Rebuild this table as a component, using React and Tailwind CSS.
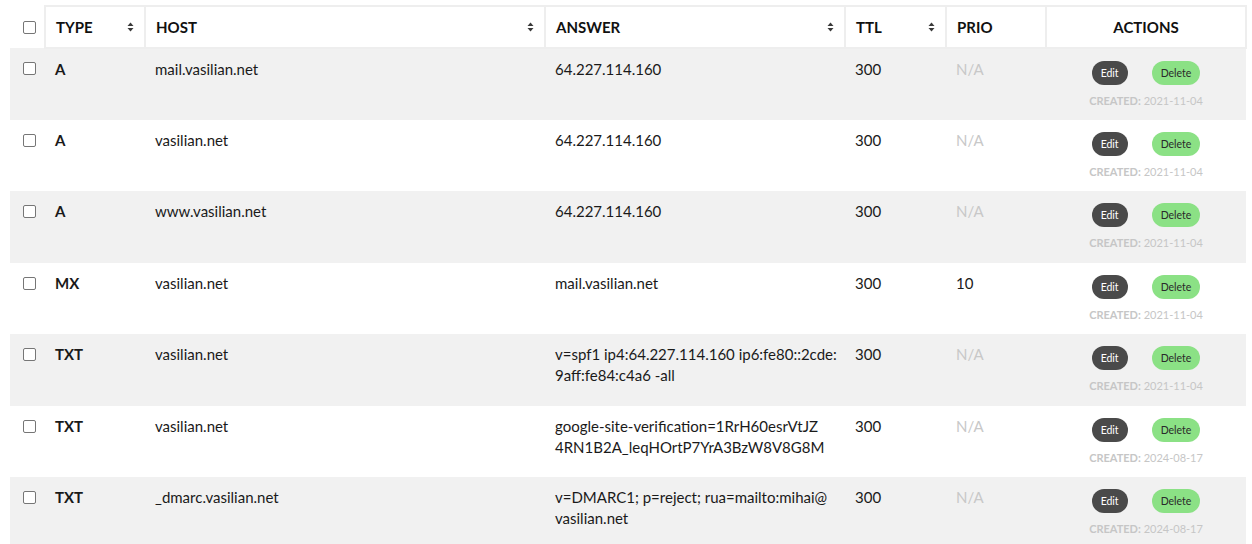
import React from "react";

const rows = [
  { type: "A", host: "mail.vasilian.net", answer: ["64.227.114.160"], ttl: "300", prio: null, created: "2021-11-04" },
  { type: "A", host: "vasilian.net", answer: ["64.227.114.160"], ttl: "300", prio: null, created: "2021-11-04" },
  { type: "A", host: "www.vasilian.net", answer: ["64.227.114.160"], ttl: "300", prio: null, created: "2021-11-04" },
  { type: "MX", host: "vasilian.net", answer: ["mail.vasilian.net"], ttl: "300", prio: "10", created: "2021-11-04" },
  { type: "TXT", host: "vasilian.net", answer: ["v=spf1 ip4:64.227.114.160 ip6:fe80::2cde:", "9aff:fe84:c4a6 -all"], ttl: "300", prio: null, created: "2021-11-04" },
  { type: "TXT", host: "vasilian.net", answer: ["google-site-verification=1RrH60esrVtJZ", "4RN1B2A_leqHOrtP7YrA3BzW8V8G8M"], ttl: "300", prio: null, created: "2024-08-17" },
  { type: "TXT", host: "_dmarc.vasilian.net", answer: ["v=DMARC1; p=reject; rua=mailto:mihai@", "vasilian.net"], ttl: "300", prio: null, created: "2024-08-17" },
];

function SortIcon() {
  return (
    <svg width="7" height="10" viewBox="0 0 7 10" className="shrink-0">
      <path d="M3.5 0.5 L6.5 4 L0.5 4 Z" fill="#3a3a3a" />
      <path d="M3.5 9.5 L6.5 6 L0.5 6 Z" fill="#3a3a3a" />
    </svg>
  );
}

function Box() {
  return <span className="block w-[13px] h-[13px] border border-[#767676] rounded-[2px] bg-white" />;
}

function Th({ label, sort = true }) {
  return (
    <th className="border-2 border-[#eeeeee] px-[10px] h-[42px] text-left align-middle">
      <div className="flex items-center justify-between">
        <span className="font-bold text-[15px] text-[#111]">{label}</span>
        {sort && <SortIcon />}
      </div>
    </th>
  );
}

export default function App() {
  return (
    <div className="bg-white w-[1252px] h-[544px] overflow-hidden pl-[10px] pt-[5px]" style={{ fontFamily: "Lato, 'Liberation Sans', sans-serif" }}>
      <table className="table-fixed border-collapse w-[1236px] text-[15px] text-[#1a1a1a]">
        <colgroup>
          <col className="w-[35px]" />
          <col className="w-[100px]" />
          <col className="w-[400px]" />
          <col className="w-[300px]" />
          <col className="w-[101px]" />
          <col className="w-[100px]" />
          <col className="w-[200px]" />
        </colgroup>
        <thead>
          <tr>
            <th className="h-[42px] align-middle pl-[13px] text-left">
              <Box />
            </th>
            <Th label="TYPE" />
            <Th label="HOST" />
            <Th label="ANSWER" />
            <Th label="TTL" />
            <Th label="PRIO" sort={false} />
            <th className="border-2 border-[#eeeeee] h-[42px] text-center align-middle font-bold text-[15px] text-[#111]">ACTIONS</th>
          </tr>
        </thead>
        <tbody>
          {rows.map((r, i) => (
            <tr key={i} className={i % 2 === 0 ? "bg-[#f1f1f1] h-[71.5px]" : "bg-white h-[71.5px]"}>
              <td className="align-top pl-[13px] pt-[14px]">
                <Box />
              </td>
              <td className="align-top px-[10px] pt-[10px] leading-[21px] font-bold">{r.type}</td>
              <td className="align-top px-[10px] pt-[10px] leading-[21px]">{r.host}</td>
              <td className="align-top px-[10px] pt-[10px] leading-[21px]">
                {r.answer.map((l, j) => (
                  <span key={j} className="block whitespace-nowrap">{l}</span>
                ))}
              </td>
              <td className="align-top px-[10px] pt-[10px] leading-[21px]">{r.ttl}</td>
              <td className={"align-top px-[10px] pt-[10px] leading-[21px] " + (r.prio ? "" : "text-[#c8c8c8]")}>{r.prio ?? "N/A"}</td>
              <td className="align-top pt-[12px] text-center">
                <div className="flex justify-center gap-[24px]">
                  <button className="h-[24px] px-[9px] rounded-full bg-[#4a4a4a] text-white text-[10.5px] leading-[24px]">Edit</button>
                  <button className="h-[24px] px-[9px] rounded-full bg-[#8be185] text-[#2a2a2a] text-[10.5px] leading-[24px]">Delete</button>
                </div>
                <div className="mt-[9px] text-[11px] text-[#c6c6c6] leading-[14px]">
                  <span className="font-bold">CREATED:</span> {r.created}
                </div>
              </td>
            </tr>
          ))}
        </tbody>
      </table>
    </div>
  );
}
